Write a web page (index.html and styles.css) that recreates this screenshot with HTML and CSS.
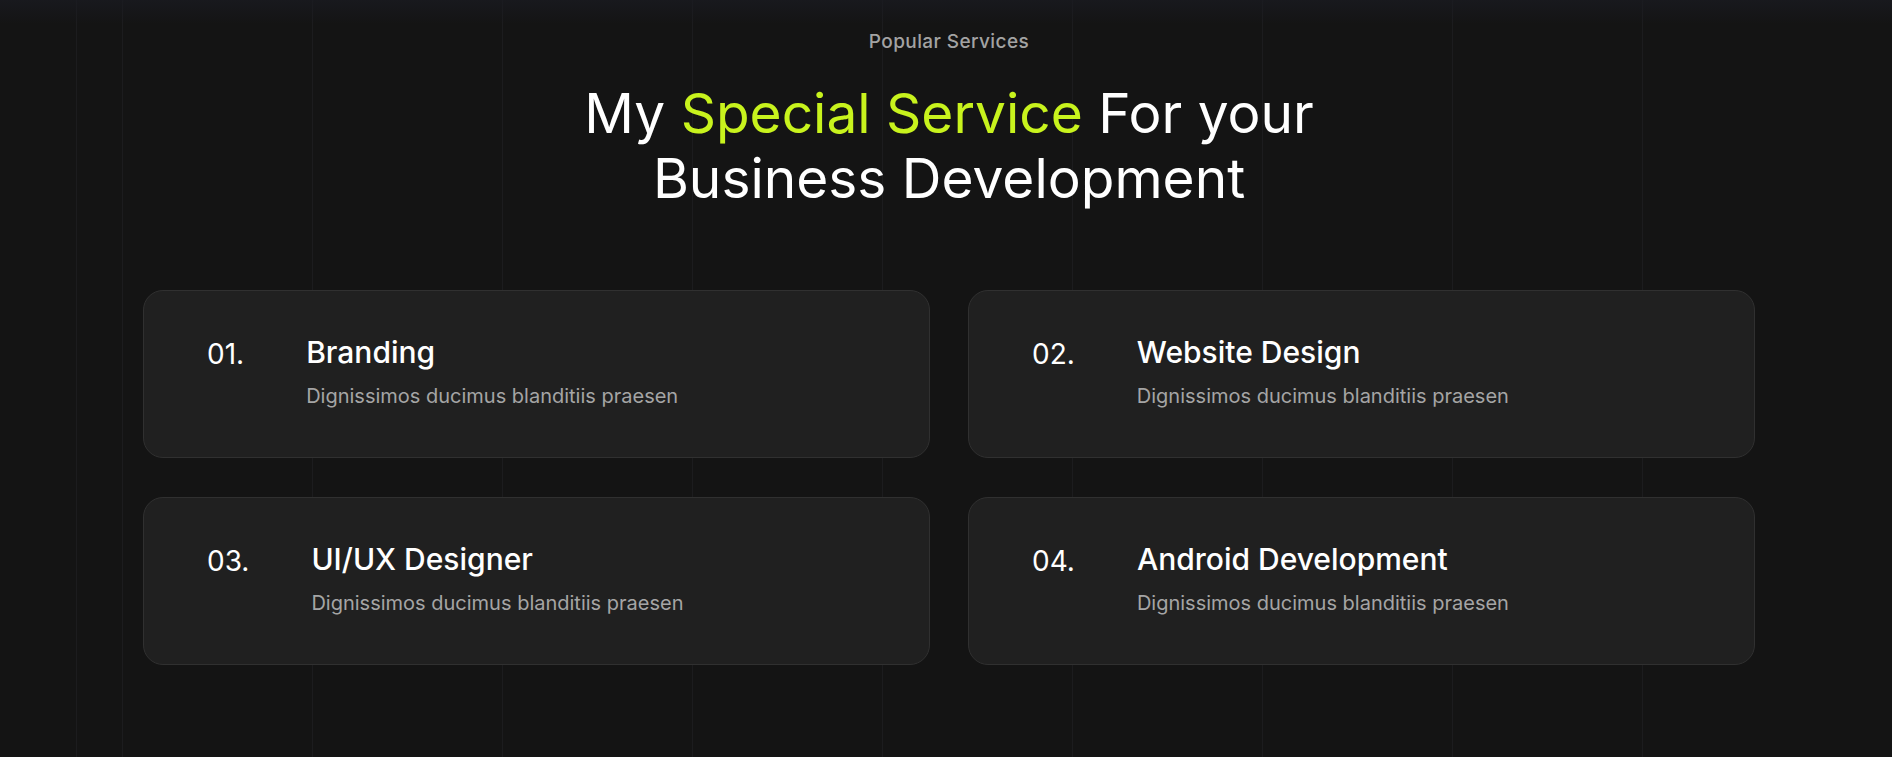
FILE: index.html
```html
<!DOCTYPE html>
<html lang="en">
<head>
<meta charset="utf-8">
<title>Popular Services</title>
<link rel="stylesheet" href="styles.css">
</head>
<body>
<section class="services">
  <p class="eyebrow">Popular Services</p>
  <h2 class="heading">My <span class="accent">Special Service</span> For your<br>Business Development</h2>
  <div class="grid">
    <div class="card">
      <span class="num">01.</span>
      <div class="body">
        <h3 class="title">Branding</h3>
        <p class="desc">Dignissimos ducimus blanditiis praesen</p>
      </div>
    </div>
    <div class="card">
      <span class="num">02.</span>
      <div class="body">
        <h3 class="title">Website Design</h3>
        <p class="desc">Dignissimos ducimus blanditiis praesen</p>
      </div>
    </div>
    <div class="card">
      <span class="num">03.</span>
      <div class="body">
        <h3 class="title">UI/UX Designer</h3>
        <p class="desc">Dignissimos ducimus blanditiis praesen</p>
      </div>
    </div>
    <div class="card">
      <span class="num">04.</span>
      <div class="body">
        <h3 class="title">Android Development</h3>
        <p class="desc">Dignissimos ducimus blanditiis praesen</p>
      </div>
    </div>
  </div>
</section>
</body>
</html>
```
FILE: styles.css
```css
html, body {
  margin: 0;
  padding: 0;
}
body {
  min-height: 100vh;
  background-color: #141414;
  background-image:
    linear-gradient(to bottom, rgba(26, 27, 34, 0.7) 0, rgba(20, 20, 20, 0) 24px),
    linear-gradient(to right, transparent 76px, #1c1c1e 76px, #1c1c1e 77px, transparent 77px),
    repeating-linear-gradient(to right, #1c1c1e 0, #1c1c1e 1px, transparent 1px, transparent 190px);
  background-repeat: no-repeat;
  background-size: 100% 100%, 100% 100%, 1521px 100%;
  background-position: 0 0, 0 0, 122px 0;
  font-family: "Inter", "Liberation Sans", sans-serif;
  color: #fff;
}
.services {
  display: flex;
  flex-direction: column;
  align-items: center;
  padding: 29px 0 60px 6px;
}
.eyebrow {
  margin: 0;
  font-size: 19px;
  line-height: 25px;
  font-weight: 500;
  letter-spacing: 0.4px;
  color: #a3a3a3;
}
.heading {
  margin: 27px 0 0;
  font-size: 55px;
  line-height: 65px;
  font-weight: 400;
  text-align: center;
  color: #ffffff;
}
.accent {
  color: #c8f31d;
}
.grid {
  margin-top: 79px;
  width: 1612px;
  display: grid;
  grid-template-columns: 1fr 1fr;
  column-gap: 38px;
  row-gap: 39px;
}
.card {
  box-sizing: border-box;
  height: 168px;
  display: flex;
  align-items: flex-start;
  gap: 62px;
  padding: 43px 63px 0;
  background: #202020;
  border: 1px solid #303030;
  border-radius: 20px;
}
.num {
  margin-top: 2px;
  font-size: 28px;
  line-height: 36px;
  font-weight: 400;
  color: #fff;
}
.body {
  display: flex;
  flex-direction: column;
  gap: 12px;
}
.title {
  margin: 0;
  font-size: 30px;
  line-height: 36px;
  font-weight: 500;
  color: #fff;
}
.desc {
  margin: 0;
  font-size: 20px;
  line-height: 28px;
  font-weight: 400;
  color: #a5a5a5;
}
```
